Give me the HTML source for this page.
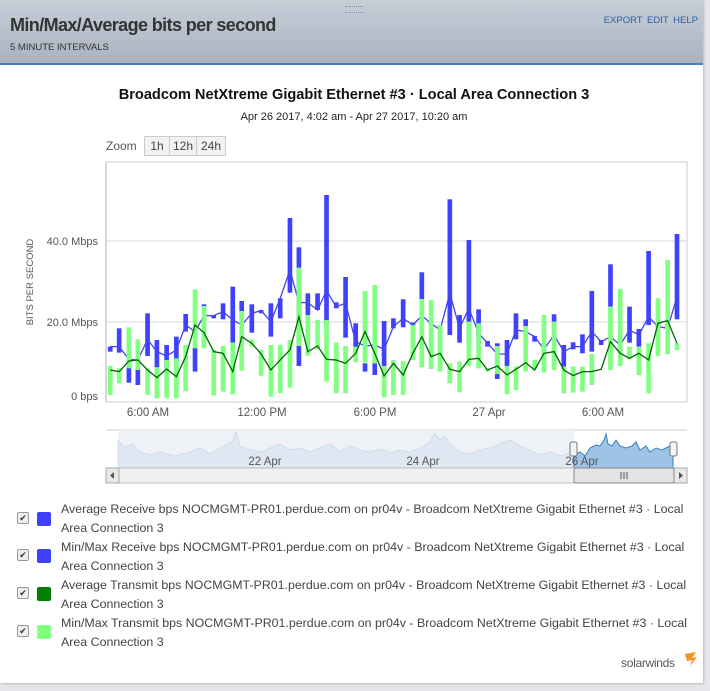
<!DOCTYPE html>
<html><head><meta charset="utf-8"><style>
body{margin:0;width:710px;height:691px;overflow:hidden;background:#e4e6e9;font-family:"Liberation Sans",sans-serif;position:relative}
.card{position:absolute;left:0;top:0;width:703px;height:683px;background:#fff;box-shadow:1px 1px 2px #bbb}
.hdr{position:absolute;left:0;top:0;width:703px;height:63px;background:linear-gradient(#c6ced8,#aab3bf);border-bottom:2px solid #4a7fb5}
.ttl{position:absolute;left:10px;top:15px;font-size:18px;font-weight:bold;color:#333;letter-spacing:-0.6px}
.sub{position:absolute;left:10px;top:42px;font-size:9.5px;color:#333}
.act{position:absolute;right:5px;top:15px;font-size:9.5px;color:#2d5f9a;word-spacing:2px}
.grip{position:absolute;left:345px;top:6px;width:18px;height:5px;border-top:1px dotted #889;border-bottom:1px dotted #889}
.t{position:absolute;white-space:nowrap}
.leg{position:absolute;left:61px;font-size:12.4px;color:#444;line-height:19px;width:640px}
.cb{position:absolute;left:17px;width:10px;height:10px;border:1px solid #999;border-radius:2px;background:#eee;font-size:9px;line-height:10px;text-align:center;color:#333}
.sq{position:absolute;left:37px;width:14px;height:14px;border-radius:2px}
</style></head><body>
<div class="card">
<div class="hdr"><div class="grip"></div><div class="ttl">Min/Max/Average bits per second</div><div class="sub">5 MINUTE INTERVALS</div><div class="act">EXPORT EDIT HELP</div></div>
<div class="t" style="left:0;width:708px;text-align:center;top:87px;font-size:14.6px;font-weight:bold;color:#111">Broadcom NetXtreme Gigabit Ethernet #3 · Local Area Connection 3</div>
<div class="t" style="left:0;width:708px;text-align:center;top:111px;font-size:11px;color:#222">Apr 26 2017, 4:02 am - Apr 27 2017, 10:20 am</div>
<div class="t" style="left:106px;top:139px;font-size:12px;color:#555">Zoom</div>
<div style="position:absolute;left:144px;top:136px;height:18px;width:80px;border:1px solid #ccc;background:#f2f2f2;font-size:12px;color:#444;display:flex">
<span style="width:24px;text-align:center;line-height:18px;border-right:1px solid #ccc">1h</span><span style="width:26px;text-align:center;line-height:18px;border-right:1px solid #ccc">12h</span><span style="width:28px;text-align:center;line-height:18px">24h</span></div>
<svg width="710" height="500" style="position:absolute;left:0;top:0" font-family="Liberation Sans,sans-serif">
<line x1="106" y1="162" x2="687" y2="162" stroke="#ccc"/>
<line x1="687" y1="162" x2="687" y2="402" stroke="#ccc"/>
<line x1="106" y1="241" x2="687" y2="241" stroke="#d8d8d8"/>
<line x1="106" y1="322" x2="687" y2="322" stroke="#d8d8d8"/>
<line x1="106" y1="402" x2="687" y2="402" stroke="#ccc"/>
<line x1="106" y1="162" x2="106" y2="402" stroke="#ccc" stroke-width="1.5"/>
<text x="98" y="245" font-size="11" fill="#555" text-anchor="end">40.0 Mbps</text>
<text x="98" y="326" font-size="11" fill="#555" text-anchor="end">20.0 Mbps</text>
<text x="98" y="400" font-size="11" fill="#555" text-anchor="end">0 bps</text>
<text transform="translate(33,282) rotate(-90)" font-size="9.5" fill="#555" text-anchor="middle">BITS PER SECOND</text>
<g font-size="11.5" fill="#555" text-anchor="middle"><text x="148" y="416">6:00 AM</text><text x="262" y="416">12:00 PM</text><text x="375" y="416">6:00 PM</text><text x="489" y="416">27 Apr</text><text x="603" y="416">6:00 AM</text></g>
<g transform="translate(90,150) scale(0.389,0.3333)">
<g fill="#4040ff">
<rect x="46" y="590" width="12" height="15"/><rect x="69" y="535" width="12" height="73"/><rect x="94" y="630" width="12" height="68"/><rect x="117" y="630" width="12" height="75"/><rect x="142" y="490" width="12" height="128"/><rect x="166" y="570" width="12" height="82"/><rect x="191" y="585" width="12" height="65"/><rect x="216" y="560" width="12" height="80"/><rect x="240" y="492" width="12" height="53"/><rect x="264" y="593" width="12" height="72"/><rect x="287" y="463" width="12" height="8"/><rect x="312" y="496" width="12" height="9"/><rect x="336" y="460" width="12" height="48"/><rect x="361" y="410" width="12" height="168"/><rect x="384" y="453" width="12" height="34"/><rect x="410" y="463" width="12" height="85"/><rect x="434" y="480" width="12" height="10"/><rect x="459" y="460" width="12" height="100"/><rect x="483" y="445" width="12" height="60"/><rect x="508" y="204" width="12" height="224"/><rect x="531" y="292" width="12" height="356"/><rect x="554" y="430" width="12" height="65"/><rect x="579" y="430" width="12" height="50"/><rect x="602" y="135" width="12" height="390"/><rect x="627" y="457" width="12" height="18"/><rect x="651" y="381" width="12" height="182"/><rect x="677" y="520" width="12" height="88"/><rect x="701" y="640" width="12" height="25"/><rect x="726" y="640" width="12" height="35"/><rect x="750" y="513" width="12" height="135"/><rect x="774" y="505" width="12" height="30"/><rect x="799" y="448" width="12" height="84"/><rect x="824" y="518" width="12" height="10"/><rect x="847" y="367" width="12" height="80"/><rect x="871" y="510" width="12" height="15"/><rect x="894" y="525" width="12" height="10"/><rect x="919" y="148" width="12" height="407"/><rect x="944" y="495" width="12" height="83"/><rect x="968" y="270" width="12" height="310"/><rect x="993" y="478" width="12" height="82"/><rect x="1016" y="573" width="12" height="17"/><rect x="1041" y="580" width="12" height="107"/><rect x="1066" y="570" width="12" height="78"/><rect x="1089" y="490" width="12" height="78"/><rect x="1114" y="508" width="12" height="20"/><rect x="1137" y="558" width="12" height="17"/><rect x="1161" y="595" width="12" height="8"/><rect x="1187" y="493" width="12" height="22"/><rect x="1212" y="585" width="12" height="65"/><rect x="1236" y="577" width="12" height="21"/><rect x="1260" y="553" width="12" height="57"/><rect x="1284" y="423" width="12" height="182"/><rect x="1308" y="570" width="12" height="15"/><rect x="1332" y="343" width="12" height="127"/><rect x="1357" y="560" width="12" height="25"/><rect x="1381" y="470" width="12" height="108"/><rect x="1405" y="537" width="12" height="53"/><rect x="1430" y="303" width="12" height="222"/><rect x="1454" y="518" width="12" height="12"/><rect x="1479" y="520" width="12" height="8"/><rect x="1503" y="252" width="12" height="256"/>
</g>
<polyline fill="none" stroke="#4444ee" stroke-width="1.3" vector-effect="non-scaling-stroke" points="52,590 75,590 100,628 123,630 148,568 172,605 197,618 222,600 246,525 270,545 293,497 318,497 342,485 367,510 390,525 416,490 440,482 465,515 489,445 514,360 537,458 560,458 585,480 608,422 633,470 657,460 683,575 707,588 732,585 756,598 780,530 805,505 830,525 853,497 877,520 900,540 925,430 950,535 974,475 999,550 1022,580 1047,612 1072,612 1095,540 1120,545 1143,560 1167,598 1193,555 1218,605 1242,590 1266,590 1290,545 1314,575 1338,560 1363,585 1387,540 1411,555 1436,500 1460,530 1485,535 1509,440"/>
<g fill="#80ff80">
<rect x="46" y="648" width="12" height="87"/><rect x="69" y="655" width="12" height="45"/><rect x="94" y="532" width="12" height="123"/><rect x="117" y="568" width="12" height="92"/><rect x="142" y="655" width="12" height="80"/><rect x="166" y="653" width="12" height="92"/><rect x="191" y="630" width="12" height="115"/><rect x="216" y="625" width="12" height="120"/><rect x="240" y="585" width="12" height="138"/><rect x="264" y="418" width="12" height="177"/><rect x="287" y="468" width="12" height="127"/><rect x="312" y="600" width="12" height="137"/><rect x="336" y="588" width="12" height="137"/><rect x="361" y="578" width="12" height="155"/><rect x="384" y="483" width="12" height="179"/><rect x="410" y="568" width="12" height="22"/><rect x="434" y="600" width="12" height="77"/><rect x="459" y="585" width="12" height="155"/><rect x="483" y="585" width="12" height="145"/><rect x="508" y="570" width="12" height="143"/><rect x="531" y="353" width="12" height="235"/><rect x="554" y="495" width="12" height="122"/><rect x="579" y="510" width="12" height="87"/><rect x="602" y="510" width="12" height="185"/><rect x="627" y="578" width="12" height="152"/><rect x="651" y="588" width="12" height="142"/><rect x="677" y="590" width="12" height="47"/><rect x="701" y="423" width="12" height="215"/><rect x="726" y="405" width="12" height="235"/><rect x="750" y="648" width="12" height="94"/><rect x="774" y="630" width="12" height="105"/><rect x="799" y="633" width="12" height="102"/><rect x="824" y="525" width="12" height="105"/><rect x="847" y="447" width="12" height="205"/><rect x="871" y="450" width="12" height="207"/><rect x="894" y="525" width="12" height="140"/><rect x="919" y="640" width="12" height="60"/><rect x="944" y="635" width="12" height="92"/><rect x="968" y="515" width="12" height="133"/><rect x="993" y="520" width="12" height="135"/><rect x="1016" y="655" width="12" height="10"/><rect x="1041" y="588" width="12" height="84"/><rect x="1066" y="648" width="12" height="85"/><rect x="1089" y="650" width="12" height="70"/><rect x="1114" y="528" width="12" height="137"/><rect x="1137" y="630" width="12" height="28"/><rect x="1161" y="495" width="12" height="173"/><rect x="1187" y="515" width="12" height="145"/><rect x="1212" y="650" width="12" height="80"/><rect x="1236" y="650" width="12" height="78"/><rect x="1260" y="650" width="12" height="75"/><rect x="1284" y="612" width="12" height="93"/><rect x="1332" y="470" width="12" height="190"/><rect x="1357" y="417" width="12" height="231"/><rect x="1381" y="590" width="12" height="38"/><rect x="1405" y="590" width="12" height="85"/><rect x="1430" y="580" width="12" height="150"/><rect x="1454" y="445" width="12" height="173"/><rect x="1479" y="330" width="12" height="283"/><rect x="1503" y="580" width="12" height="20"/>
</g>
<polyline fill="none" stroke="#006600" stroke-width="1.3" vector-effect="non-scaling-stroke" points="52,660 75,665 100,633 123,630 148,660 172,683 197,657 222,680 246,620 270,525 293,548 318,605 342,610 367,665 390,560 416,580 440,612 465,660 489,630 514,600 537,500 560,605 585,588 608,628 633,630 657,640 683,610 707,545 732,610 756,678 780,640 805,675 830,610 853,560 877,620 900,610 925,658 950,665 974,628 999,625 1022,660 1047,648 1072,675 1095,658 1120,638 1143,660 1167,610 1193,605 1218,660 1242,677 1266,665 1290,665 1314,658 1338,575 1363,610 1387,625 1411,610 1436,630 1460,520 1485,512 1509,580"/>
</g>
<line x1="106" y1="430" x2="687" y2="430" stroke="#ccc"/>
<rect x="118" y="430" width="456" height="38" fill="#eef1f5"/>
<path d="M118 468 L118 440 L125 448 L132 444 L140 452 L150 455 L160 452 L175 456 L190 452 L200 448 L210 454 L222 447 L232 442 L236 432 L240 446 L250 450 L262 452 L270 448 L280 444 L290 450 L300 448 L310 452 L320 448 L330 444 L340 452 L350 446 L360 450 L370 452 L380 449 L390 453 L400 450 L410 452 L420 448 L430 442 L435 433 L440 440 L445 436 L450 444 L460 452 L470 454 L480 450 L490 448 L500 444 L510 440 L520 446 L530 450 L540 455 L550 452 L560 456 L574 452 L574 468Z" fill="#dfe8f2" stroke="#c8d8ea" stroke-width="0.8"/>
<path d="M574 468 L574 455 L580 452 L585 456 L590 448 L596 445 L600 446 L604 440 L606 434 L608 444 L612 446 L616 440 L620 446 L626 448 L632 446 L636 442 L640 450 L646 446 L650 452 L656 448 L662 450 L668 447 L673 444 L673 468Z" fill="#9dc3e6" stroke="#3b7fc4" stroke-width="1"/>
<line x1="673" y1="430" x2="687" y2="430" stroke="#ccc"/>
<g font-size="11.5" fill="#555" text-anchor="middle"><text x="265" y="465">22 Apr</text><text x="423" y="465">24 Apr</text><text x="582" y="465">26 Apr</text></g>
<rect x="570" y="442" width="7" height="14" rx="2" fill="#f4f4f4" stroke="#777"/>
<rect x="670" y="442" width="7" height="14" rx="2" fill="#f4f4f4" stroke="#777"/>
<rect x="106" y="468" width="581" height="15" fill="#f0f0f0" stroke="#bbb"/>
<rect x="106" y="468" width="13" height="15" fill="#e8e8e8" stroke="#aaa"/>
<rect x="674" y="468" width="13" height="15" fill="#e8e8e8" stroke="#aaa"/>
<path d="M114 472 L110 475.5 L114 479Z M679 472 L683 475.5 L679 479Z" fill="#555"/>
<rect x="574" y="468" width="100" height="15" rx="2" fill="#e4e4e4" stroke="#888"/>
<path d="M621 472 V479 M624 472 V479 M627 472 V479" stroke="#555"/>
</svg>
<div class="cb" style="top:512px">✔</div><div class="sq" style="top:512px;background:#4040ff"></div>
<div class="leg" style="top:500px">Average Receive bps NOCMGMT-PR01.perdue.com on pr04v - Broadcom NetXtreme Gigabit Ethernet #3 · Local Area Connection 3</div>
<div class="cb" style="top:549px">✔</div><div class="sq" style="top:549px;background:#4040ff"></div>
<div class="leg" style="top:538px">Min/Max Receive bps NOCMGMT-PR01.perdue.com on pr04v - Broadcom NetXtreme Gigabit Ethernet #3 · Local Area Connection 3</div>
<div class="cb" style="top:587px">✔</div><div class="sq" style="top:587px;background:#008000"></div>
<div class="leg" style="top:576px">Average Transmit bps NOCMGMT-PR01.perdue.com on pr04v - Broadcom NetXtreme Gigabit Ethernet #3 · Local Area Connection 3</div>
<div class="cb" style="top:625px">✔</div><div class="sq" style="top:625px;background:#80ff80"></div>
<div class="leg" style="top:614px">Min/Max Transmit bps NOCMGMT-PR01.perdue.com on pr04v - Broadcom NetXtreme Gigabit Ethernet #3 · Local Area Connection 3</div>
<div class="t" style="left:621px;top:656px;font-size:12px;color:#555;letter-spacing:-0.3px">solarwinds</div>
<svg width="14" height="16" style="position:absolute;left:684px;top:652px"><path d="M1 2 L12 0 L8 6 L13 5 L6 14 L8 8 L3 9Z" fill="#f7941d"/></svg>
</div>
</body></html>
